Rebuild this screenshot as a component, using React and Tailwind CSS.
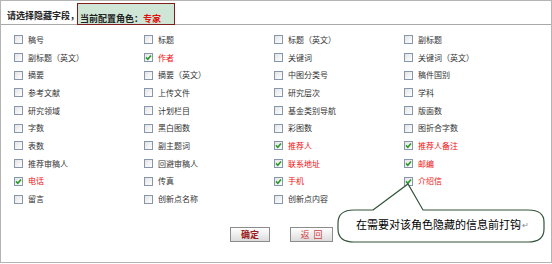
import React from "react";

const rows = [
  [["稿号"], ["标题"], ["标题（英文）"], ["副标题"]],
  [["副标题（英文）"], ["作者", 1], ["关键词"], ["关键词（英文）"]],
  [["摘要"], ["摘要（英文）"], ["中图分类号"], ["稿件国别"]],
  [["参考文献"], ["上传文件"], ["研究层次"], ["学科"]],
  [["研究领域"], ["计划栏目"], ["基金类别导航"], ["版面数"]],
  [["字数"], ["黑白图数"], ["彩图数"], ["图折合字数"]],
  [["表数"], ["副主题词"], ["推荐人", 1], ["推荐人备注", 1]],
  [["推荐审稿人"], ["回避审稿人"], ["联系地址", 1], ["邮编", 1]],
  [["电话", 1], ["传真"], ["手机", 1], ["介绍信", 1]],
  [["留言"], ["创新点名称"], ["创新点内容"], null],
];

function Box({ checked }) {
  return (
    <span className="relative w-[9px] h-[9px] border border-[#8596ad] bg-gradient-to-br from-[#e4e4e4] to-white shrink-0">
      {checked && (
        <svg className="absolute left-[0px] top-[0px]" width="7" height="7" viewBox="0 0 7 7">
          <path d="M1 3.4 L2.8 5.2 L6 1.4" stroke="#2a9a2a" strokeWidth="1.6" fill="none" />
        </svg>
      )}
    </span>
  );
}

export default function App() {
  return (
    <div
      className="relative w-[552px] h-[264px] bg-white overflow-hidden"
      style={{ fontFamily: '"Noto Sans CJK SC", "Noto Sans", sans-serif' }}
    >
      <div className="w-[552px] h-[263px] border border-[#b4b4b4] flex flex-col">
        <div className="h-[24px] border-b border-[#a8a8a8] flex items-end relative">
          <span className="text-[9px] font-bold text-[#222] leading-none pl-[6px] pb-[4px]">请选择隐藏字段，</span>
          <div className="ml-[-2px] h-[22px] w-[98px] mb-[-1px] bg-[#cfe6d6] border border-[#7e1d1d] flex items-center pl-[2px] pt-[8px]">
            <span className="text-[9px] font-bold text-[#222] leading-none">当前配置角色：</span>
            <span className="text-[9px] font-bold text-[#e01010] leading-none">专家</span>
          </div>
        </div>
        <div className="pt-[6px] pl-[13px] grid grid-cols-[130px_130px_130px_130px]">
          {rows.map((r, i) =>
            r.map((c, j) =>
              c ? (
                <div key={i + "-" + j} className="h-[17.7px] flex items-center gap-[5px]">
                  <Box checked={!!c[1]} />
                  <span className={"text-[8px] leading-none " + (c[1] ? "text-[#f01010]" : "text-[#333]")}>{c[0]}</span>
                </div>
              ) : (
                <div key={i + "-" + j} />
              )
            )
          )}
        </div>
        <div className="flex pl-[229px] gap-[20px] mt-[19px]">
          <button className="w-[40px] h-[15px] border border-[#8c8c8c] bg-gradient-to-b from-white to-[#dcdcdc] text-[9px] leading-none text-[#9a2020] font-bold">确定</button>
          <button className="w-[43px] h-[15px] border border-[#8c8c8c] bg-gradient-to-b from-white to-[#dcdcdc] text-[9px] leading-none text-[#d04040]">返&nbsp;&nbsp;回</button>
        </div>
      </div>
      <svg className="absolute left-0 top-0 pointer-events-none" width="552" height="264">
        <path
          d="M373,210 L408,184 L423,210 L528,210 Q544,210 544,222 L544,229 Q544,242 528,242 L354,242 Q338,242 338,229 L338,223 Q338,210 354,210 Z"
          fill="white"
          stroke="#33553a"
          strokeWidth="1.2"
        />
      </svg>
      <div className="absolute left-[356px] top-[219px] flex items-center">
        <span className="text-[11px] leading-none text-black">在需要对该角色隐藏的信息前打钩</span>
        <span className="text-[8px] leading-none text-[#888] ml-[1px]">↵</span>
      </div>
    </div>
  );
}
